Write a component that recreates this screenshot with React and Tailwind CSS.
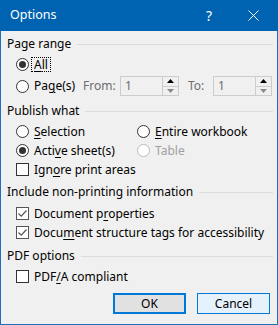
import React from "react";

const F = { fontFamily: '"Noto Sans", "Liberation Sans", sans-serif' };

function U({ children }) {
  return <span className="underline underline-offset-2 decoration-1">{children}</span>;
}

function Radio({ checked, disabled }) {
  return (
    <span
      className={
        "flex items-center justify-center w-[13px] h-[13px] rounded-full border bg-white shrink-0 " +
        (disabled ? "border-[#bcbcbc] bg-[#f0f0f0]" : "border-[#333333]")
      }
    >
      {checked && <span className="w-[7px] h-[7px] rounded-full bg-[#333333]" />}
    </span>
  );
}

function Check({ checked }) {
  return (
    <span
      className={
        "flex items-center justify-center w-[13px] h-[13px] border bg-white shrink-0 " +
        (checked ? "border-[#555555]" : "border-[#333333]")
      }
    >
      {checked && (
        <svg width="11" height="11" viewBox="0 0 11 11">
          <path d="M1.5 5.5 L4.2 8.2 L9.5 2.5" fill="none" stroke="#555" strokeWidth="1.2" />
        </svg>
      )}
    </span>
  );
}

function Header({ children }) {
  return (
    <div className="flex items-center h-[16px] pl-[6px] pr-[4px]">
      <span className="text-[12px] text-black whitespace-nowrap">{children}</span>
      <span className="flex-1 h-px bg-[#dcdcdc] ml-[6px]" />
    </div>
  );
}

function Spin() {
  return (
    <div className="flex items-center w-[59px] h-[20px] border border-[#cccccc] bg-[#f0f0f0]">
      <span className="flex-1 pl-[4px] text-[12px] text-[#6d6d6d] leading-none">1</span>
      <div className="flex flex-col w-[16px] h-full">
        <div className="flex-1 flex items-center justify-center border-b border-l border-[#cccccc] bg-[#f0f0f0]">
          <svg width="7" height="4" viewBox="0 0 7 4"><path d="M0 4 L3.5 0 L7 4 Z" fill="#000" /></svg>
        </div>
        <div className="flex-1 flex items-center justify-center border-l border-[#cccccc]">
          <svg width="7" height="4" viewBox="0 0 7 4"><path d="M0 0 L3.5 4 L7 0 Z" fill="#8a8a8a" /></svg>
        </div>
      </div>
    </div>
  );
}

export default function App() {
  return (
    <div
      className="w-[278px] h-[325px] bg-[#f0f0f0] border-x border-b border-[#1f6fc0] flex flex-col text-[12px] text-black"
      style={F}
    >
      <div className="h-[31px] -mx-px bg-[#0063b1] flex items-center text-white shrink-0">
        <span className="pl-[10px] text-[12.5px] flex-1">Options</span>
        <span className="text-[14px] mr-[36px]">?</span>
        <svg width="11" height="11" viewBox="0 0 11 11" className="mr-[19px]">
          <path d="M0.5 0.5 L10.5 10.5 M10.5 0.5 L0.5 10.5" stroke="#fff" strokeWidth="1" />
        </svg>
      </div>

      <div className="mt-[5px]"><Header>Page range</Header></div>

      <div className="mt-[3px] h-[19px] flex items-center pl-[15px]">
        <Radio checked />
        <span className="ml-[2px] px-[2px] border border-dotted border-black leading-[13px]"><U>A</U>ll</span>
      </div>

      <div className="mt-[2px] h-[20px] flex items-center pl-[15px]">
        <Radio />
        <span className="ml-[5px] w-[49px]">Pa<U>g</U>e(s)</span>
        <span className="text-[#6d6d6d] w-[37px]">From:</span>
        <Spin />
        <span className="text-[#6d6d6d] ml-[9px] w-[25px]">To:</span>
        <Spin />
      </div>

      <div className="mt-[7px]"><Header>Publish what</Header></div>

      <div className="mt-[3px] flex pl-[15px]">
        <div className="flex flex-col w-[121px]">
          <div className="h-[19px] flex items-center"><Radio /><span className="ml-[5px]"><U>S</U>election</span></div>
          <div className="h-[19px] flex items-center"><Radio checked /><span className="ml-[5px]">Acti<U>v</U>e sheet(s)</span></div>
        </div>
        <div className="flex flex-col">
          <div className="h-[19px] flex items-center"><Radio /><span className="ml-[5px]"><U>E</U>ntire workbook</span></div>
          <div className="h-[19px] flex items-center"><Radio disabled /><span className="ml-[5px] text-[#a0a0a0]">Table</span></div>
        </div>
      </div>
      <div className="h-[19px] flex items-center pl-[15px]"><Check /><span className="ml-[5px]">Ign<U>o</U>re print areas</span></div>

      <div className="mt-[5px]"><Header>Include non-printing information</Header></div>

      <div className="mt-[4px] h-[19px] flex items-center pl-[15px]"><Check checked /><span className="ml-[5px]">Document p<U>r</U>operties</span></div>
      <div className="h-[19px] flex items-center pl-[15px]"><Check checked /><span className="ml-[5px]">Docu<U>m</U>ent structure tags for accessibility</span></div>

      <div className="mt-[6px]"><Header>PDF options</Header></div>

      <div className="mt-[3px] h-[19px] flex items-center pl-[15px]"><Check /><span className="ml-[5px]">PDF<U>/</U>A compliant</span></div>

      <div className="mt-[7px] flex justify-end pr-[7px] gap-[11px]">
        <button className="w-[73px] h-[21px] border-2 border-[#0078d7] bg-[#e1e1e1] text-[12px] flex items-center justify-center">OK</button>
        <button className="w-[73px] h-[21px] border border-[#0078d7] bg-[#e5f1fb] text-[12px] flex items-center justify-center">Cancel</button>
      </div>
    </div>
  );
}
